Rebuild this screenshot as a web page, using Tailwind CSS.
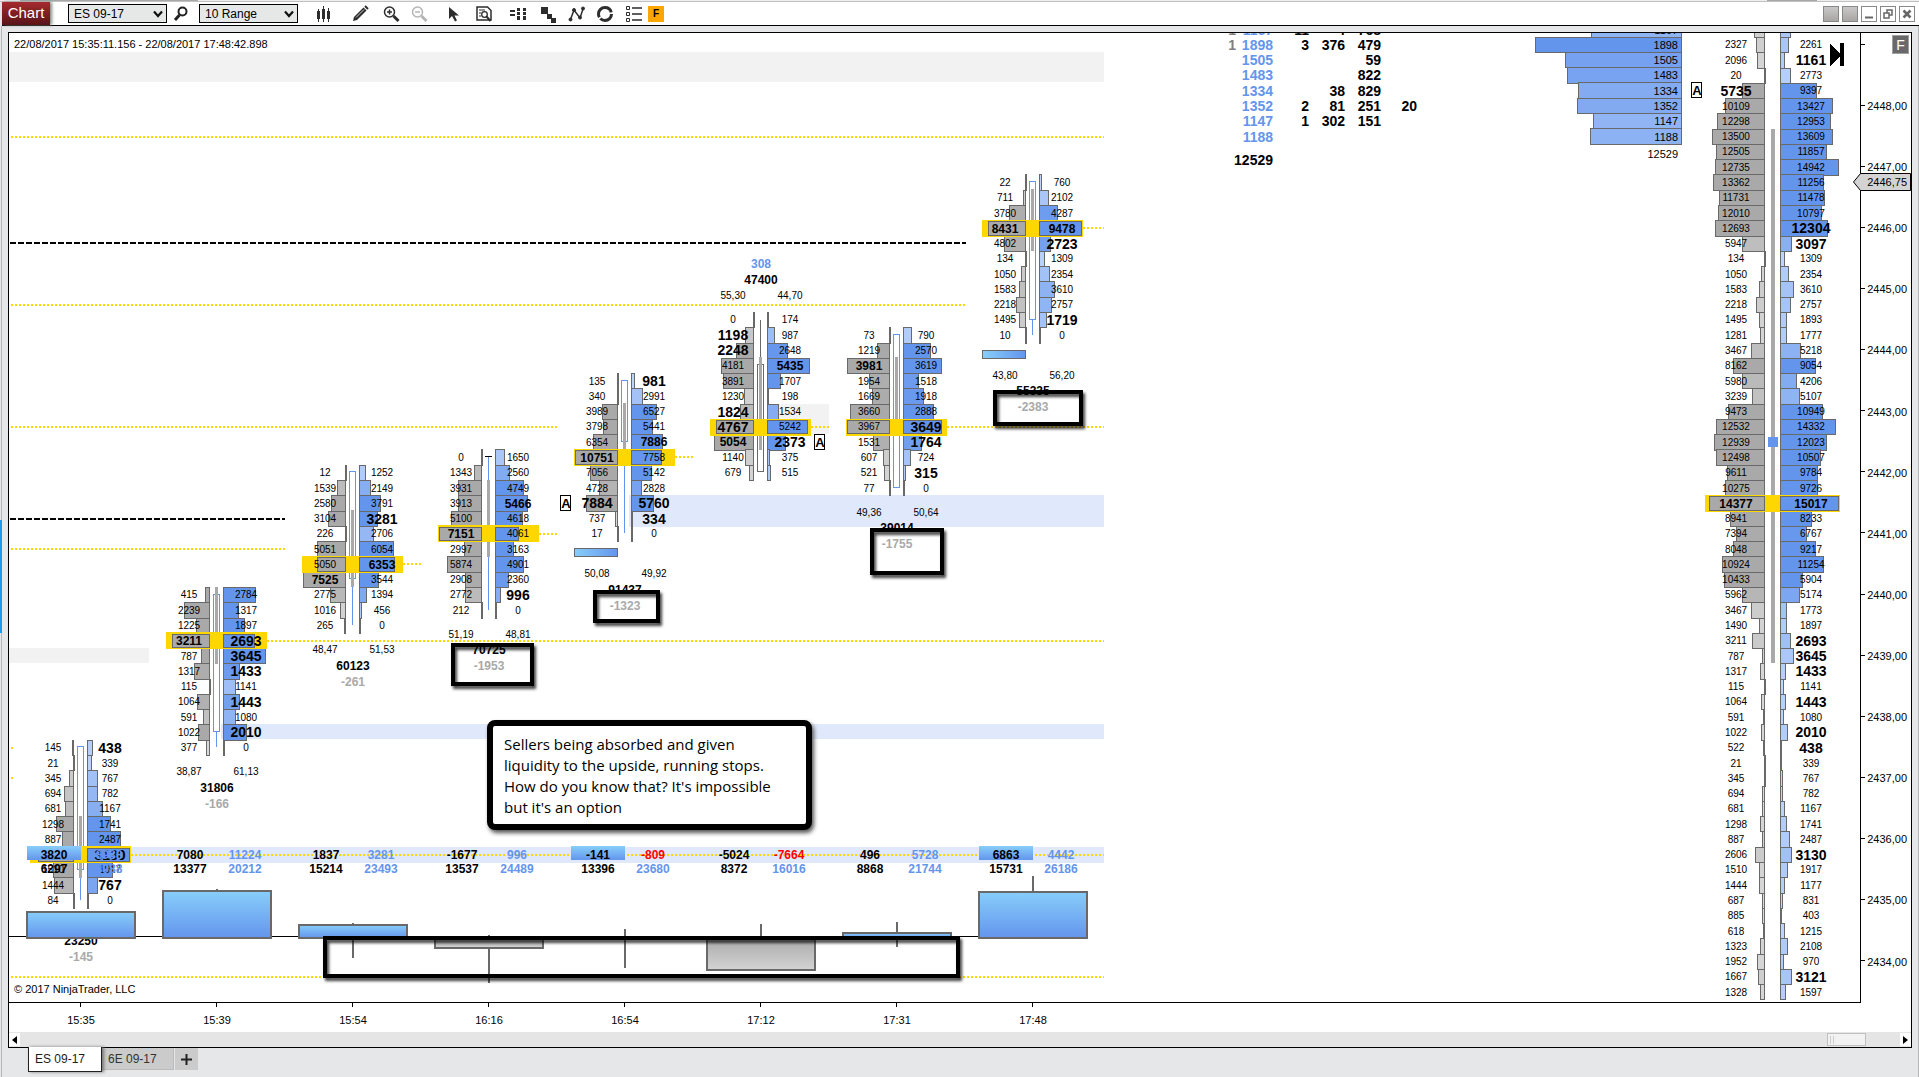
<!DOCTYPE html>
<html lang="en">
<head>
<meta charset="utf-8">
<title>Chart - ES 09-17</title>
<script src="https://cdn.jsdelivr.net/npm/@tailwindcss/browser@4"></script>
</head>
<body class="min-h-screen flex flex-col bg-[#e6e7e9] font-['Liberation_Sans',Arial,sans-serif] text-black overflow-hidden">

<div class="h-[2px] shrink-0 flex justify-between bg-[#eeeeee] border-b border-[#c0c0c0]">
  <span class="ml-5 w-[178px] bg-[#a8a8a8]"></span>
  <span class="mr-[102px] w-[50px] bg-[#a8a8a8]"></span>
</div>

<header class="h-6 ml-[2px] shrink-0 flex items-center bg-white border-b border-black">
  <h1 class="self-stretch w-12 flex items-center justify-center bg-linear-to-b from-[#a62a2e] to-[#571417] text-white text-[15px] shadow-[2px_0_3px_#888]">Chart</h1>
  <div class="relative ml-[18px]">
    <select aria-label="Instrument" class="appearance-none block w-[99px] h-[19px] pl-[5px] bg-[#e6e8e8] border border-black text-xs leading-4"><option>ES 09-17</option><option>6E 09-17</option></select>
    <svg class="absolute right-[4px] top-[6px] pointer-events-none" width="10" height="8" viewBox="0 0 10 8"><path d="M1 1.500 5 6l4-4.500" fill="none" stroke="#111" stroke-width="2.200"/></svg>
  </div>
  <button aria-label="Search" class="ml-[6px] w-4 h-4"><svg width="16" height="16" viewBox="0 0 16 16" fill="none" stroke="#222"><circle cx="9.500" cy="5.500" r="4" stroke-width="2"/><path d="M6.500 9 2 14" stroke-width="3"/></svg></button>
  <div class="relative ml-[10px]">
    <select aria-label="Interval" class="appearance-none block w-[99px] h-[19px] pl-[5px] bg-[#e6e8e8] border border-black text-xs leading-4"><option>10 Range</option></select>
    <svg class="absolute right-[4px] top-[6px] pointer-events-none" width="10" height="8" viewBox="0 0 10 8"><path d="M1 1.500 5 6l4-4.500" fill="none" stroke="#111" stroke-width="2.200"/></svg>
  </div>
  <nav aria-label="Chart tools" class="ml-[17px] flex items-center gap-[14px]">
    <button aria-label="Chart style" class="w-[17px] h-[18px]"><svg width="17" height="18" viewBox="0 0 17 18" fill="#2d2d2d"><path d="M2 6h3v8H2zM3 4h1v13H3zM7 4h3v10H7zM8 1h1v16H8zM12 6h3v8h-3zM13 3h1v14h-1z"/></svg></button>
    <button aria-label="Draw" class="ml-[6px] w-[17px] h-[18px]"><svg width="17" height="18" viewBox="0 0 17 18"><path d="M2 12 11.500 2.500l3 3L5 15l-4 1z" fill="#2d2d2d"/><path d="m4 12.500 8-8" stroke="#ccc"/><path d="m13 1 3 3" stroke="#2d2d2d" stroke-width="2"/></svg></button>
    <button aria-label="Zoom in" class="w-[17px] h-[18px]"><svg width="17" height="18" viewBox="0 0 17 18" fill="none" stroke="#2d2d2d"><circle cx="6.500" cy="7" r="5" stroke-width="1.500"/><path d="M4 7h5M6.500 4.500v5" stroke-width="1.500"/><path d="m10.500 11 5 5" stroke-width="3"/></svg></button>
    <button aria-label="Zoom out" disabled class="-ml-[3px] w-[17px] h-[18px]"><svg width="17" height="18" viewBox="0 0 17 18" fill="none" stroke="#b5b5b5"><circle cx="6.500" cy="7" r="5" stroke-width="1.500"/><path d="M4 7h5" stroke-width="1.500"/><path d="m10.500 11 5 5" stroke-width="3"/></svg></button>
    <button aria-label="Cursor" class="ml-[2px] w-[17px] h-[18px]"><svg width="17" height="18" viewBox="0 0 17 18" fill="#2d2d2d"><path d="M5 2v12l3-3 3 5.500 2-1-2.500-5H15z"/></svg></button>
    <button aria-label="Data box" class="w-[17px] h-[18px]"><svg width="17" height="18" viewBox="0 0 17 18" fill="none" stroke="#2d2d2d"><path d="M2 2h10.500L16 5.500V15H2z" stroke-width="1.500"/><path d="M4 5h6M4 8h2M4 11h2" /><circle cx="9.500" cy="9.500" r="2.800" stroke-width="1.300"/><path d="m11.500 11.500 4 4.500" stroke-width="2"/></svg></button>
    <button aria-label="Depth of market" class="ml-[3px] w-[17px] h-[18px]"><svg width="17" height="18" viewBox="0 0 17 18" fill="#2d2d2d"><path d="M1 5h5v2H1zM1 9h5v2H1zM8 3h3v3H8zM8 7h3v3H8zM8 11h3v4H8zM14 3h3v3h-3zM14 7h3v3h-3zM14 11h3v4h-3z"/></svg></button>
    <button aria-label="Strategies" class="w-[17px] h-[18px]"><svg width="17" height="18" viewBox="0 0 17 18" fill="#2d2d2d"><path d="M1 2h7v7H1zM7 9h5v4h4v5h-5v-4H7z"/></svg></button>
    <button aria-label="Indicators" class="-ml-[3px] w-[17px] h-[18px]"><svg width="17" height="18" viewBox="0 0 17 18" fill="#2d2d2d" stroke="#2d2d2d"><path d="M2.500 14.500 6 5l6 8 3-9" fill="none" stroke-width="1.500"/><circle cx="2.500" cy="14.500" r="1.500"/><circle cx="6" cy="5" r="1.500"/><circle cx="12" cy="12.500" r="1.500"/><circle cx="15" cy="3.500" r="1.500"/></svg></button>
    <button aria-label="Refresh" class="-ml-[3px] w-[17px] h-[18px]"><svg width="17" height="18" viewBox="0 0 17 18" fill="none" stroke="#2d2d2d"><circle cx="9" cy="9" r="6.500" stroke-width="3" stroke-dasharray="15 1.500 21.500 2.500"/></svg></button>
    <button aria-label="Properties" class="-ml-[2px] w-[17px] h-[18px]"><svg width="17" height="18" viewBox="0 0 17 18" fill="none" stroke="#2d2d2d"><path d="M1.500 1.500h3v3h-3zM1.500 7.500h3v3h-3zM1.500 13.500h3v3h-3z"/><path d="M7 3h10M7 9h10M7 15h10" stroke-width="1.500"/></svg></button>
    <button class="-ml-[8px] w-4 h-4 bg-[#ffa500] text-[10px] leading-4 font-bold">F</button>
  </nav>
  <div class="ml-auto mr-1 flex gap-[3px]">
    <button aria-label="Link instrument" class="w-4 h-4 border border-[#888] bg-linear-to-b from-[#c9c7c7] to-[#a9a5a5]"></button>
    <button aria-label="Link interval" class="w-4 h-4 border border-[#888] bg-linear-to-b from-[#c9c7c7] to-[#a9a5a5]"></button>
    <button aria-label="Minimize" class="w-4 h-4 border border-[#888]"><svg width="14" height="14"><path d="M3 10.500h8" stroke="#666" stroke-width="2"/></svg></button>
    <button aria-label="Restore" class="w-4 h-4 border border-[#888]"><svg width="14" height="14" fill="none" stroke="#666" stroke-width="1.500"><path d="M6 6V3h5v5H8M3 6h5v5H3z"/></svg></button>
    <button aria-label="Close" class="w-4 h-4 border border-[#888]"><svg width="14" height="14"><path d="m3.500 3.500 7 7m0-7-7 7" stroke="#666" stroke-width="2.500"/></svg></button>
  </div>
</header>

<main class="flex-1 flex flex-col ml-px pl-[6px] pr-[6px] pt-[6px] border-x border-[#b4b7ba]">
  <section class="flex-1 flex flex-col border border-black bg-white">
    <div class="flex-1 flex min-h-[969px]">
      <div id="plot" class="relative flex-1 overflow-hidden border-b border-black">
        <svg id="sessions" class="absolute left-0 top-0" width="1096" height="969"></svg>
        <svg id="profile" class="absolute right-0 top-0" width="640" height="969"></svg>
        <p class="absolute left-[5px] top-[4px] text-[11px] leading-[14px] whitespace-nowrap">22/08/2017 15:35:11.156 - 22/08/2017 17:48:42.898</p>
        <p class="absolute left-[5px] bottom-[5px] text-[11px] leading-4">© 2017 NinjaTrader, LLC</p>
        <aside class="absolute left-[478px] top-[687px] w-[325px] h-[110px] pl-[11px] pt-[8px] rounded-[8px] border-[6px] border-black bg-white shadow-[2px_3px_4px_#555] font-['Open_Sans','Noto_Sans',sans-serif] text-[15px] leading-[21px] whitespace-nowrap">Sellers being absorbed and given<br>liquidity to the upside, running stops.<br>How do you know that? It's impossible<br>but it's an option</aside>
      </div>
      <div class="relative w-[51px]">
        <svg id="prices" class="absolute right-0 top-0" width="58" height="970"></svg>
        <button class="absolute right-[2px] top-[2px] w-[17px] h-[19px] bg-[#696969] border border-[#a0a0a0] text-white text-sm leading-4">F</button>
      </div>
    </div>
    <svg id="times" class="shrink-0 w-full" height="29"></svg>
    <div role="scrollbar" aria-label="Chart history" aria-controls="plot" aria-valuenow="100" aria-orientation="horizontal" class="shrink-0 h-[15px] flex items-center bg-[#e5e5e5]">
      <button aria-label="Scroll left" class="w-[11px] h-[13px] bg-white flex items-center justify-center"><svg width="5" height="8"><path d="M5 0v8L0 4z"/></svg></button>
      <span class="ml-auto mr-[34px] w-[39px] h-[13px] border border-[#c0c0c0] bg-[#f2f2f2] flex items-center gap-[2px] pl-[2px]"><i class="w-px h-2 bg-[#ccc]"></i><i class="w-px h-2 bg-[#ccc]"></i></span>
      <button aria-label="Scroll right" class="w-[11px] h-[13px] bg-white flex items-center justify-center"><svg width="5" height="8"><path d="M0 0v8l5-4z"/></svg></button>
    </div>
  </section>
  <nav aria-label="Chart tabs" class="h-[29px] shrink-0 flex items-start pl-5 text-[#1c1c1c]">
    <button class="relative -mt-px w-[74px] h-[25px] pl-[6px] text-left bg-white border border-t-0 border-[#222] text-xs font-medium shadow-[2px_0_3px_#777]">ES 09-17</button>
    <button class="w-[72px] h-[22px] pl-[6px] text-left bg-[#cbcbcb] border-r border-b border-[#bbb] text-xs text-[#333]">6E 09-17</button>
    <button aria-label="Add tab" class="ml-px w-[23px] h-[22px] bg-[#cbcbcb] flex items-center justify-center"><svg width="11" height="11"><path d="M5.500 0v11M0 5.500h11" stroke="#222" stroke-width="2"/></svg></button>
  </nav>
</main>
<div class="absolute left-0 top-[520px] w-[2px] h-[113px] bg-[#1a9af0]"></div>

<script>
const NS = 'http://www.w3.org/2000/svg';
const BLUE = '#6495ed', GREY = '#a9a9a9', EDGE = '#696969', GOLD = '#ffd700';
const TICK = 0.25, TOP = 33, LEFT = 9;
const yOf = price => 105.7 + (2448 - price) * 61.11;

function layer(id, dx) {
  const g = document.createElementNS(NS, 'g');
  g.setAttribute('transform', `translate(${-dx} ${-TOP})`);
  document.getElementById(id).appendChild(g);
  return g;
}
function add(parent, tag, attrs, content) {
  const el = document.createElementNS(NS, tag);
  for (const k in attrs) el.setAttribute(k, attrs[k]);
  if (content !== undefined) el.textContent = content;
  parent.appendChild(el);
  return el;
}
// Filled rectangle whose outline stays inside its edges
function box(g, x1, y1, x2, y2, fill, stroke, sw = 1) {
  x1 = Math.round(x1); y1 = Math.round(y1); x2 = Math.round(x2); y2 = Math.round(y2);
  if (!stroke) return add(g, 'rect', { x: x1, y: y1, width: x2 - x1, height: y2 - y1, fill });
  if (x2 - x1 <= sw * 2) return add(g, 'rect', { x: x1, y: y1, width: Math.max(2, x2 - x1), height: y2 - y1, fill: stroke });
  return add(g, 'rect', { x: x1 + sw / 2, y: y1 + sw / 2, width: x2 - x1 - sw, height: y2 - y1 - sw, fill, stroke, 'stroke-width': sw });
}
function label(g, x, y, text, { size = 10, bold = false, fill = '#000', anchor = 'middle' } = {}) {
  add(g, 'text', { x: Math.round(x), y: Math.round(y + size * 0.36 + 0.3), 'font-size': size, 'font-weight': bold ? 700 : 400, fill, 'text-anchor': anchor }, text);
}
function dots(g, y, x1, x2) {
  add(g, 'line', { x1, x2, y1: Math.round(y), y2: Math.round(y), stroke: GOLD, 'stroke-width': 2, 'stroke-dasharray': '2 2' });
}
function dashes(g, y, x1, x2) {
  add(g, 'line', { x1, x2, y1: y, y2: y, stroke: '#000', 'stroke-width': 2, 'stroke-dasharray': '6 2' });
}
function mix(from, to, f) {
  return 'rgb(' + from.map((c, i) => Math.round(c + (to[i] - c) * f)).join(',') + ')';
}
const blueShade = f => mix([200, 220, 252], [100, 149, 237], f);
const greyShade = f => mix([224, 224, 224], [169, 169, 169], f);

// Rows are "bid/ask"; * marks a bold value, ! marks a large bold value
function parse(rows) {
  return rows.split(' ').map(r => r.split('/').map(t => ({ v: parseInt(t), size: t.endsWith('!') ? 14 : t.endsWith('*') ? 12 : 10 })));
}
function ladder(g, rows, first, poc, lx, rx, lt, rt, maxW, hx1, hx2) {
  const maxV = Math.max(...rows.flat().map(c => c.v));
  const maxT = Math.max(...rows.map(r => r[0].v + r[1].v));
  rows.forEach((r, i) => { if (i !== poc) row(r, i); });
  const py = yOf(first - poc * TICK);
  box(g, hx1, py - 8, hx2, py + 9, GOLD);
  row(rows[poc], poc);
  function row([a, b], i) {
    const y = yOf(first - i * TICK), f = Math.min(1, (a.v + b.v) / maxT * 2), inset = i === poc ? 1 : 0;
    const y1 = Math.round(y - 7.6) + inset, y2 = Math.round(y + 7.7) + 1 - inset;
    box(g, lx - Math.max(1, a.v / maxV * maxW), y1, lx, y2, greyShade(f), EDGE);
    box(g, rx, y1, rx + Math.max(1, b.v / maxV * maxW), y2, blueShade(f), EDGE);
    label(g, lt, y, a.v, { size: a.size, bold: a.size > 10 });
    label(g, rt, y, b.v, { size: b.size, bold: b.size > 10 });
  }
}

const sessions = [
  { time: '15:35', c: 81, first: 2437.5, poc: 7, body: [0, 8], va: [5, 8], foot: ['', '', '23250', '-145'],
    rows: '145/438! 21/339 345/767 694/782 681/1167 1298/1741 887/2487 2606/3130! 1510/1917 1444/767! 84/0',
    cum: ['3820', '8988', '6297', '8988'], lit: true, hist: [911, 939] },
  { time: '15:39', c: 217, first: 2440, poc: 3, body: [0, 9], va: [0, 4], foot: ['38,87', '61,13', '31806', '-166'],
    rows: '415/2784 2239/1317 1225/1897 3211*/2693! 787/3645! 1317/1433! 115/1141 1064/1443! 591/1080 1022/2010! 377/0',
    cum: ['7080', '11224', '13377', '20212'], hist: [890, 939], wick: [889, 890] },
  { time: '15:54', c: 353, first: 2442, poc: 6, body: [0, 7], va: [3, 7], foot: ['48,47', '51,53', '60123', '-261'],
    rows: '12/1252 1539/2149 2580/3791 3104/3281! 226/2706 5051/6054 5050/6353* 7525*/3544 2775/1394 1016/456 265/0',
    cum: ['1837', '3281', '15214', '23493'], hist: [924, 939], wick: [923, 958] },
  { time: '16:16', c: 489, first: 2442.25, poc: 5, body: [0, 0], va: [2, 6], foot: ['51,19', '48,81', '70725', '-1953'],
    rows: '0/1650 1343/2560 3931/4749 3913/5466* 5100/4618 7151*/4061 2997/3163 5874/4901 2908/2360 2772/996! 212/0',
    cum: ['-1677', '996', '13537', '24489'], hist: [936, 949], down: true, wick: [935, 983] },
  { time: '16:54', c: 625, first: 2443.5, poc: 5, body: [0, 4], va: [2, 5], foot: ['50,08', '49,92', '91437', '-1323'], gauge: true,
    rows: '135/981! 340/2991 3989/6527 3798/5441 6354/7886* 10751*/7758 7056/5142 4728/2828 7884!/5760! 737/334! 17/0',
    cum: ['-141', '-809', '13396', '23680'], lit: true, hist: [936, 938], down: true, wick: [929, 968] },
  { time: '17:12', c: 761, first: 2444.5, poc: 7, body: [3, 10], va: [3, 8], head: ['55,30', '44,70', '47400', '308'],
    rows: '0/174 1198!/987 2248!/2648 4181/5435* 3891/1707 1230/198 1824!/1534 4767!/5242 5054*/2373! 1140/375 679/515',
    cum: ['-5024', '-7664', '8372', '16016'], hist: [936, 971], down: true, wick: [924, 936] },
  { time: '17:31', c: 897, first: 2444.25, poc: 6, body: [0, 10], va: [2, 6], foot: ['49,36', '50,64', '39014', '-1755'],
    rows: '73/790 1219/2570 3981*/3619 1954/1518 1669/1918 3660/2888 3967/3649! 1531/1764! 607/724 521/315! 77/0',
    cum: ['496', '5728', '8868', '21744'], hist: [932, 939], wick: [922, 947] },
  { time: '17:48', c: 1033, first: 2446.75, poc: 3, body: [0, 9], va: [1, 4], foot: ['43,80', '56,20', '55335', '-2383'], gauge: true,
    rows: '22/760 711/2102 3780/4287 8431*/9478* 4802/2723! 134/1309 1050/2354 1583/3610 2218/2757 1495/1719! 10/0',
    cum: ['6863', '4442', '15731', '26186'], lit: true, hist: [891, 939], wick: [876, 891] },
];

function drawSessions() {
  const svg = document.getElementById('sessions');
  const defs = add(svg, 'defs', {});
  const gradient = (id, a, b, dir) => {
    const lg = add(defs, 'linearGradient', Object.assign({ id }, dir));
    add(lg, 'stop', { offset: 0, 'stop-color': a }); add(lg, 'stop', { offset: 1, 'stop-color': b });
  };
  gradient('up', '#87cefa', BLUE, { x1: 0, y1: 0, x2: 0, y2: 1 });
  gradient('down', GREY, '#d3d3d3', { x1: 0, y1: 0, x2: 0, y2: 1 });
  gradient('across', '#87cefa', BLUE, { x1: 0, y1: 0, x2: 1, y2: 0 });
  const shadow = add(defs, 'filter', { id: 'shadow', x: '-20%', y: '-40%', width: '150%', height: '190%' });
  add(shadow, 'feDropShadow', { dx: 2, dy: 3, stdDeviation: 1.5, 'flood-color': '#000', 'flood-opacity': 0.75 });

  const g = layer('sessions', LEFT);
  g.setAttribute('shape-rendering', 'crispEdges');

  [[9, 52, 1104, 82], [9, 648, 149, 663], [770, 404, 829, 434]].forEach(b => box(g, ...b, '#f2f2f2'));
  [[629, 495, 1104, 527], [221, 724, 1104, 739], [80, 847, 1104, 863]].forEach(b => box(g, ...b, '#e0e9fb'));

  dots(g, 137, 11, 1104); dots(g, 305, 11, 966); dots(g, 427, 11, 557); dots(g, 549, 11, 285);
  dots(g, 427, 811, 829); dots(g, 427, 947, 1104); dots(g, 228, 1083, 1104); dots(g, 457, 675, 693);
  dots(g, 534, 539, 557); dots(g, 564, 403, 421); dots(g, 641, 267, 1104); dots(g, 855, 131, 1104);
  dots(g, 977, 11, 1104); dots(g, 748, 11, 13); dots(g, 778, 11, 13);
  dashes(g, 243, 10, 966); dashes(g, 519, 10, 285);

  for (const s of sessions) {
    const c = s.c, row = i => yOf(s.first - i * TICK), fell = !!s.head;
    const ink = fell ? EDGE : BLUE, rows = parse(s.rows), last = row(rows.length - 1);
    if (fell) box(g, c - 1, row(0), c, row(s.body[0]), ink);
    else box(g, c - 1, row(s.body[1]), c, last, ink);
    if (s.body[0] === s.body[1]) box(g, c - 4, row(0) - 1, c + 3, row(0), '#000');
    else box(g, c - 4, row(s.body[0]) - 1, c + 3, row(s.body[1]), '#fff', ink);
    box(g, c - 2, row(s.va[0]) - 8, c + 1, row(s.va[1]) + 8, GREY);
    ladder(g, rows, s.first, s.poc, c - 7, c + 6, c - 28, c + 29, 43, c - 51, c + 50);

    if (s.gauge) box(g, c - 51, last + 15, c - 7, last + 24, 'url(#across)', EDGE);
    const note = s.foot || s.head, dir = s.head ? -1 : 1, base = s.head ? row(0) : last + (s.gauge ? 16 : 0);
    label(g, c - 28, base + 24 * dir, note[0]);
    label(g, c + 29, base + 24 * dir, note[1]);
    label(g, c, base + 40 * dir, note[2], { size: 12, bold: true });
    label(g, c, base + 56 * dir, note[3], { size: 12, bold: true, fill: s.head ? BLUE : GREY });
  }

  // Delta histogram under the price rows
  box(g, 9, 936, 1088, 937, '#000');
  for (const s of sessions) {
    if (s.wick) box(g, s.c - 1, s.wick[0], s.c + 1, s.wick[1], EDGE);
    box(g, s.c - 55, s.hist[0], s.c + 55, s.hist[1], s.down ? 'url(#down)' : 'url(#up)', EDGE, 2);
    const bold = { size: 12, bold: true }, tint = t => t.startsWith('-') ? '#ff0000' : BLUE;
    if (s.lit) box(g, s.c - 54, 846, s.c, 860, 'url(#up)');
    label(g, s.c - 27, 854, s.cum[0], bold);
    label(g, s.c + 28, 854, s.cum[1], { ...bold, fill: tint(s.cum[1]) });
    label(g, s.c - 27, 868, s.cum[2], bold);
    label(g, s.c + 28, 868, s.cum[3], { ...bold, fill: BLUE });
  }

  marker(g, 560, 495); marker(g, 814, 434);

  // Hand-drawn frames
  [[451, 643, 534, 686], [593, 590, 660, 623], [870, 528, 944, 575], [993, 390, 1083, 426], [323, 936, 960, 978]].forEach(([x1, y1, x2, y2]) =>
    add(g, 'rect', { x: x1 + 2, y: y1 + 2, width: x2 - x1 - 4, height: y2 - y1 - 4, fill: 'none', stroke: '#000', 'stroke-width': 4, filter: 'url(#shadow)' }));
}

function marker(g, x, y) {
  box(g, x, y, x + 11, y + 16, '#fff', '#000');
  label(g, x + 6, y + 8, 'A', { size: 13, bold: true });
}

function drawProfile() {
  const g = layer('profile', 1220);
  g.setAttribute('shape-rendering', 'crispEdges');
  const depth = [
    ['1', 1167, '11', '4', '768', ''], ['1', 1898, '3', '376', '479', ''], ['', 1505, '', '', '59', ''],
    ['', 1483, '', '', '822', ''], ['', 1334, '', '38', '829', ''], ['', 1352, '2', '81', '251', '20'],
    ['', 1147, '1', '302', '151', ''], ['', 1188, '', '', '', '']];
  const cols = [1236, 1273, 1309, 1345, 1381, 1417];
  depth.forEach((d, i) => {
    const y = yOf(2449.25 - i * TICK);
    box(g, 1681 - d[1] / 1898 * 146, y - 8, 1682, y + 8.5, blueShade(Math.min(1, (d[1] / 1898 - .3) / .7 + .12)), EDGE);
    label(g, 1678, y, d[1], { size: 11, anchor: 'end' });
    d.forEach((t, k) => t !== '' && label(g, cols[k], y, t, { size: 14, bold: true, anchor: 'end', fill: k === 0 ? '#808080' : k === 1 ? BLUE : '#000' }));
  });
  label(g, 1678, 154, '12529', { size: 11, anchor: 'end' });
  label(g, 1273, 160, '12529', { size: 14, bold: true, anchor: 'end' });

  box(g, 1771, 129, 1775, 663, GREY);
  box(g, 1768, 437, 1778, 447, BLUE);
  box(g, 1754, 22, 1765, 38, greyShade(.3), EDGE);
  box(g, 1780, 22, 1791, 38, blueShade(.3), EDGE);
  const rows = '2327/2261 2096/1161! 20/2773 5735!/9397 10109/13427 12298/12953 13500/13609 12505/11857 12735/14942 13362/11256 11731/11478 12010/10797 12693/12304! 5947/3097! 134/1309 1050/2354 1583/3610 2218/2757 1495/1893 1281/1777 3467/5218 8162/9054 5980/4206 3239/5107 9473/10949 12532/14332 12939/12023 12498/10507 9611/9784 10275/9726 14377*/15017* 8941/8233 7394/6767 8048/9217 10924/11254 10433/5904 5962/5174 3467/1773 1490/1897 3211/2693! 787/3645! 1317/1433! 115/1141 1064/1443! 591/1080 1022/2010! 522/438! 21/339 345/767 694/782 681/1167 1298/1741 887/2487 2606/3130! 1510/1917 1444/1177 687/831 885/403 618/1215 1323/2108 1952/970 1667/3121! 1328/1597';
  ladder(g, parse(rows), 2449, 30, 1765, 1780, 1736, 1811, 59, 1705, 1840);
  marker(g, 1691, 82);
  add(g, 'path', { d: 'M1830 44l11 11-11 11zM1840 43h4v23h-4z', fill: '#000' });
}

function drawAxes() {
  const p = layer('prices', 1853);
  box(p, 1860, 33, 1861, 1003, '#000');
  for (let price = 2449; price >= 2434; price--) {
    const y = yOf(price);
    box(p, 1861, y - 1, 1865, y, '#000');
    if (price < 2449) label(p, 1907, y, price + ',00', { size: 11, anchor: 'end' });
  }
  add(p, 'path', { d: 'M1853.5 182l7-8.500h50v17h-50z', fill: '#d3d3d3', stroke: '#000' });
  label(p, 1907, 182, '2446,75', { size: 11, anchor: 'end' });
  const t = add(document.getElementById('times'), 'g', { transform: `translate(${-LEFT} -1003)` });
  for (const s of sessions) {
    box(t, s.c - 1, 1003, s.c, 1007, '#000');
    label(t, s.c, 1020, s.time, { size: 11 });
  }
}

drawSessions();
drawProfile();
drawAxes();
</script>
</body>
</html>
